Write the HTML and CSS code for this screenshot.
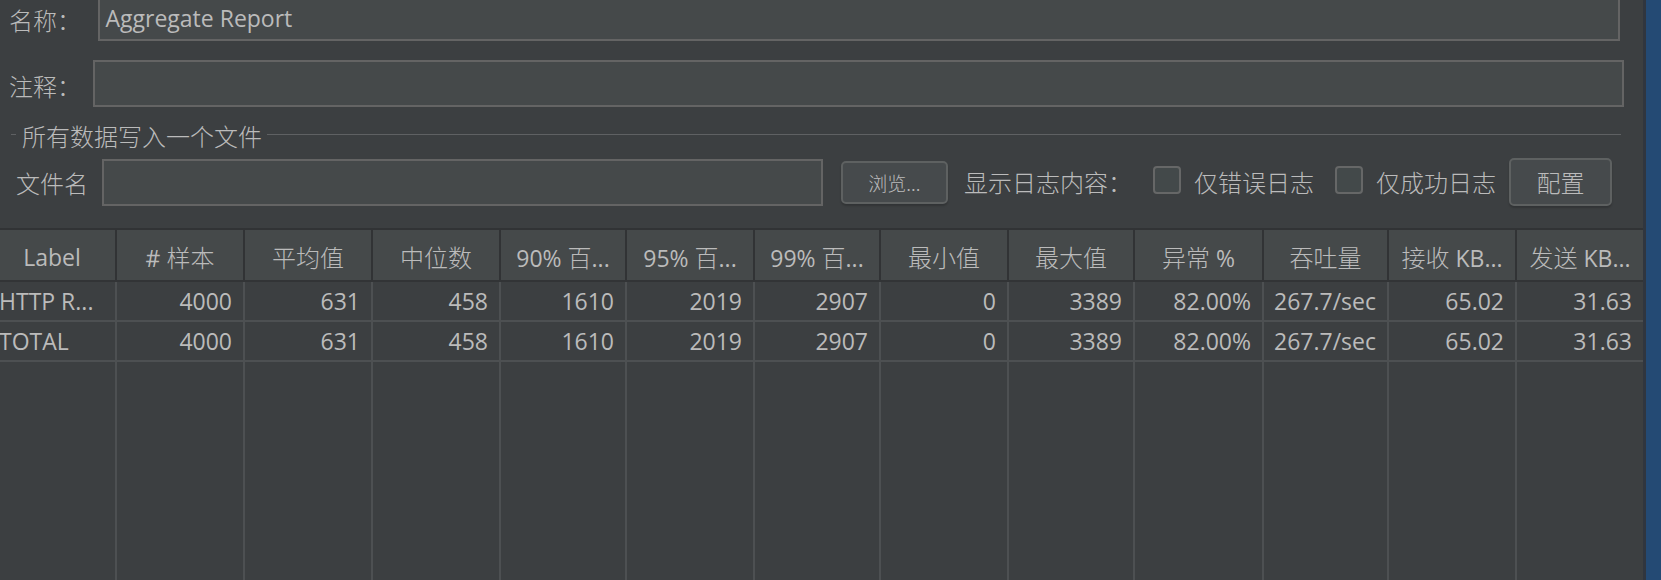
FILE: index.html
```html
<!DOCTYPE html>
<html lang="zh-CN">
<head>
<meta charset="utf-8">
<title>Aggregate Report</title>
<link rel="stylesheet" href="styles.css">
</head>
<body>
<div class="app">
  <div class="main">
    <div class="row row-name">
      <span class="lbl zh">名称：</span>
      <div class="field field-name">Aggregate Report</div>
    </div>
    <div class="row row-comment">
      <span class="lbl zh">注释：</span>
      <div class="field field-comment"></div>
    </div>
    <div class="group">
      <div class="group-title">
        <span class="gl gl-left"></span>
        <span class="zh gt">所有数据写入一个文件</span>
        <span class="gl gl-right"></span>
      </div>
      <div class="file-row">
        <span class="zh file-lbl">文件名</span>
        <div class="field field-file"></div>
        <button class="btn btn-browse">浏览...</button>
        <span class="zh log-lbl">显示日志内容：</span>
        <span class="cb"></span>
        <span class="zh cb-lbl cb-lbl1">仅错误日志</span>
        <span class="cb"></span>
        <span class="zh cb-lbl cb-lbl2">仅成功日志</span>
        <button class="btn btn-config zh">配置</button>
      </div>
    </div>
    <div class="table">
      <div class="thead">
        <div class="th">Label</div>
        <div class="th"># <span class="zh">样本</span></div>
        <div class="th zh">平均值</div>
        <div class="th zh">中位数</div>
        <div class="th">90% <span class="zh">百</span>...</div>
        <div class="th">95% <span class="zh">百</span>...</div>
        <div class="th">99% <span class="zh">百</span>...</div>
        <div class="th zh">最小值</div>
        <div class="th zh">最大值</div>
        <div class="th"><span class="zh">异常</span> %</div>
        <div class="th zh">吞吐量</div>
        <div class="th"><span class="zh">接收</span> KB...</div>
        <div class="th"><span class="zh">发送</span> KB...</div>
      </div>
      <div class="tr">
        <div class="td td-label">HTTP R...</div>
        <div class="td">4000</div>
        <div class="td">631</div>
        <div class="td">458</div>
        <div class="td">1610</div>
        <div class="td">2019</div>
        <div class="td">2907</div>
        <div class="td">0</div>
        <div class="td">3389</div>
        <div class="td">82.00%</div>
        <div class="td">267.7/sec</div>
        <div class="td">65.02</div>
        <div class="td">31.63</div>
      </div>
      <div class="tr">
        <div class="td td-label">TOTAL</div>
        <div class="td">4000</div>
        <div class="td">631</div>
        <div class="td">458</div>
        <div class="td">1610</div>
        <div class="td">2019</div>
        <div class="td">2907</div>
        <div class="td">0</div>
        <div class="td">3389</div>
        <div class="td">82.00%</div>
        <div class="td">267.7/sec</div>
        <div class="td">65.02</div>
        <div class="td">31.63</div>
      </div>
      <div class="tfill">
        <div class="tf"></div><div class="tf"></div><div class="tf"></div><div class="tf"></div>
        <div class="tf"></div><div class="tf"></div><div class="tf"></div><div class="tf"></div>
        <div class="tf"></div><div class="tf"></div><div class="tf"></div><div class="tf"></div>
        <div class="tf"></div>
      </div>
    </div>
  </div>
  <div class="strip"></div>
</div>
</body>
</html>
```
FILE: styles.css
```css
html, body {
  margin: 0;
  padding: 0;
  height: 580px;
  overflow: hidden;
  background: #3c3f41;
}
body {
  font-family: "Open Sans", "Noto Sans CJK SC", sans-serif;
  font-size: 23px;
  color: #bbbbbb;
}
.zh {
  font-family: "Noto Sans CJK SC", sans-serif;
  font-size: 24px;
  font-weight: 300;
}
.app {
  display: flex;
  height: 580px;
}
.main {
  width: 1643px;
  flex: none;
  display: flex;
  flex-direction: column;
  overflow: hidden;
}
.strip {
  flex: 1;
  background: #244a74;
  border-left: 3px solid #30363f;
}

/* form rows */
.row {
  display: flex;
  align-items: center;
  padding-left: 9px;
  flex: none;
}
.row-name {
  margin-top: -9px;
  height: 50px;
  padding-right: 23px;
}
.row-comment {
  margin-top: 19px;
  height: 47px;
  padding-right: 19px;
}
.lbl {
  line-height: 30px;
  flex: none;
}
.row-name .lbl {
  width: 88.5px;
  padding-top: 8px;
}
.row-comment .lbl {
  width: 84px;
  padding-top: 5px;
}
.field {
  box-sizing: border-box;
  background: #45494a;
  border: 2px solid #646464;
  height: 100%;
}
.field-name,
.field-comment {
  flex: 1;
}
.field-name {
  padding-left: 6px;
  padding-top: 10px;
  line-height: 30px;
}

/* group */
.group {
  margin-top: 12px;
  flex: none;
}
.group-title {
  display: flex;
  align-items: center;
  height: 30px;
}
.gl {
  height: 1px;
  background: #5f6163;
}
.gl-left {
  width: 5px;
  margin-left: 11px;
}
.gt {
  margin-left: 6px;
  line-height: 30px;
  padding-top: 3px;
}
.gl-right {
  flex: 1;
  margin-left: 5px;
  margin-right: 22px;
}
.file-row {
  margin-top: 9px;
  display: flex;
  align-items: center;
  height: 48px;
}
.file-lbl {
  margin-left: 16px;
  width: 86px;
  flex: none;
  line-height: 30px;
  padding-top: 2px;
}
.field-file {
  width: 721px;
  height: 47px;
  flex: none;
}
.btn {
  box-sizing: border-box;
  flex: none;
  background: #464a4c;
  border: 2px solid #5e6161;
  border-radius: 5px;
  color: #bbbbbb;
  padding: 0;
  box-shadow: 0 2px 2px rgba(0, 0, 0, 0.18);
}
.btn-browse {
  margin-left: 18px;
  width: 107px;
  height: 43px;
  font-family: "Noto Sans CJK SC", sans-serif;
  font-size: 19px;
  font-weight: 300;
  line-height: 39px;
}
.log-lbl {
  margin-left: 16px;
  width: 189px;
  flex: none;
  line-height: 30px;
}
.cb {
  box-sizing: border-box;
  width: 28px;
  height: 28px;
  flex: none;
  border: 2px solid #666767;
  border-radius: 4px;
  background: #43494a;
  margin-top: -5px;
}
.cb-lbl {
  margin-left: 13px;
  flex: none;
  line-height: 30px;
}
.cb-lbl1 {
  width: 141px;
}
.cb-lbl2 {
  width: 133px;
}
.btn-config {
  width: 103px;
  height: 48px;
  line-height: 44px;
}

/* table */
.table {
  margin-top: 22px;
  margin-left: -11px;
  width: 1654px;
  flex: 1;
  display: flex;
  flex-direction: column;
}
.thead,
.tr,
.tfill {
  display: grid;
  grid-template-columns: 128px 128px 128px 128px 126px 128px 126px 128px 126px 129px 125px 128px 126px;
}
.thead {
  border-top: 2px solid #313335;
  border-bottom: 2px solid #323436;
  height: 50px;
  background: #45494a;
}
.th {
  border-right: 2px solid #313335;
  text-align: center;
  line-height: 50px;
  white-space: nowrap;
  overflow: hidden;
  padding-top: 2px;
  box-sizing: border-box;
}
.th:last-child,
.td:last-child,
.tf:last-child {
  border-right: none;
}
.tr {
  height: 38px;
  border-bottom: 2px solid #4d5052;
}
.td {
  border-right: 2px solid #4d5052;
  text-align: right;
  padding-right: 11px;
  line-height: 38px;
  white-space: nowrap;
  overflow: hidden;
}
.td-label {
  text-align: left;
  padding-left: 10px;
  padding-right: 0;
}
.tfill {
  flex: 1;
}
.tf {
  border-right: 2px solid #4d5052;
}
```
